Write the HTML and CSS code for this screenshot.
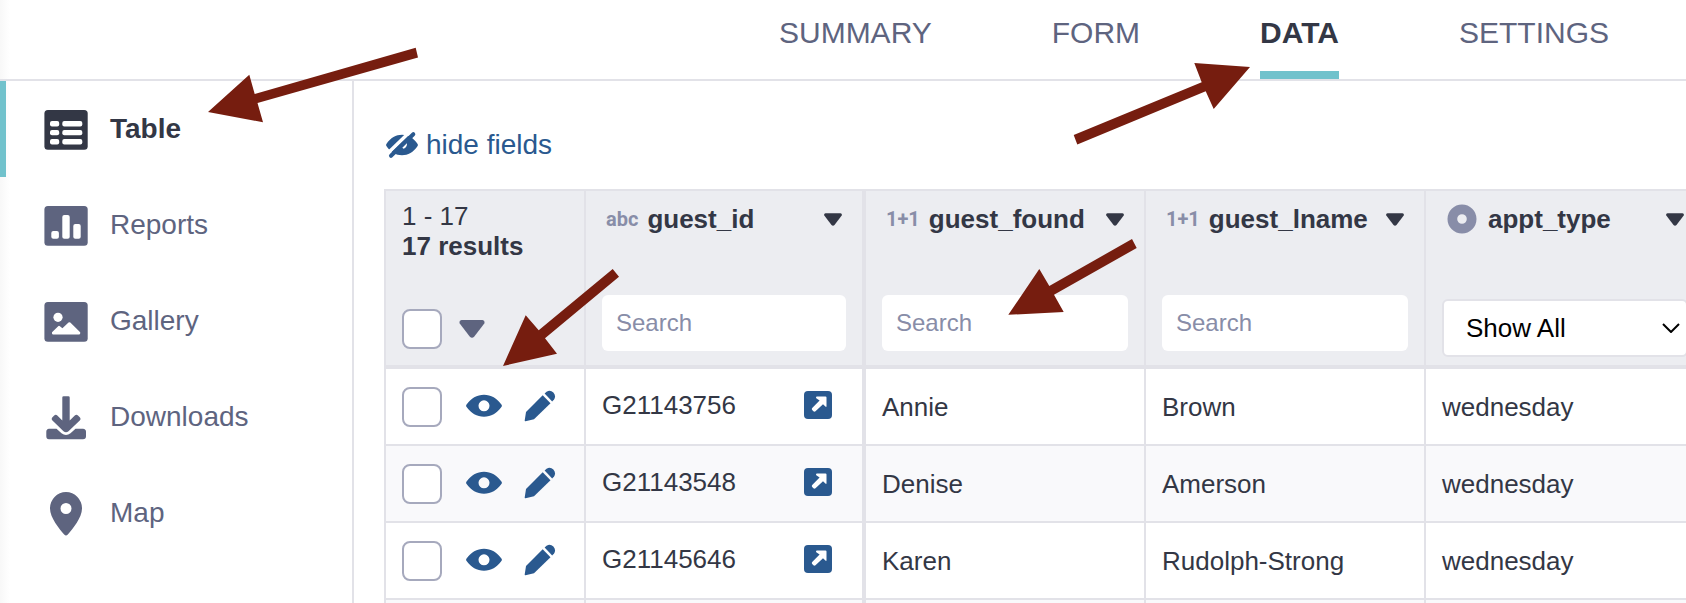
FILE: index.html
```html
<!DOCTYPE html>
<html lang="en">
<head>
<meta charset="utf-8">
<title>Data table</title>
<link rel="stylesheet" href="styles.css">
</head>
<body>
<svg class="sprite" aria-hidden="true">
  <symbol id="eye" viewBox="0 0 36 24"><path fill-rule="evenodd" d="M.4 10.700C5 4.300 11 .8 18 .8s13 3.500 17.600 9.900a2 2 0 0 1 0 2C31 19.200 25 22.700 18 22.700S5 19.200 .4 12.700a2 2 0 0 1 0-2zM18 6.300a5.500 5.500 0 1 0 0 11 5.500 5.500 0 0 0 0-11z"/></symbol>
  <symbol id="pencil" viewBox="0 0 32 32"><path d="M18.700 5.300 26.500 13.300 10 29.200 1.500 31.200Q.6 31.300.7 30.400L2 22z"/><path d="M20.600 3.600 22.600 1.700Q26.300-.4 29.400 2.600 32.200 5.800 30.200 9.300L28.200 11.500z"/></symbol>
  <symbol id="open" viewBox="0 0 28 28"><rect width="28" height="28" rx="4"/><path fill="#fff" d="M12 6.500Q12 5.600 13 5.600H21.500Q22.500 5.600 22.500 6.600V15Q22.500 16.400 21.400 15.600L19 13.200 11.500 20.300Q10.400 21.200 9.400 20.300L8.200 19.100Q7.300 18 8.200 17L15.600 9.600 12.600 7.600Q12 7.200 12 6.500z"/></symbol>
  <symbol id="caret" viewBox="0 0 24 17"><path d="M2 0H22Q24.500.6 23.600 3.200L14 15.800Q12 17.800 10 15.800L.4 3.200Q-.5.6 2 0z"/></symbol>
</svg>
<div class="app">
  <header class="topbar">
    <nav class="tabs" aria-label="Sections">
      <a class="tab" href="#summary">SUMMARY</a>
      <a class="tab" href="#form">FORM</a>
      <a class="tab tab-active" href="#data" aria-current="page">DATA</a>
      <a class="tab" href="#settings">SETTINGS</a>
    </nav>
  </header>
  <nav class="sidebar" aria-label="Data views">
    <a class="side-item side-active" href="#table">
      <svg viewBox="0 0 44 44"><rect x=".4" y="2" width="43.300" height="39.800" rx="3.500"/><g fill="#fff"><rect x="6" y="13" width="9.200" height="5.600" rx="2"/><rect x="18.300" y="13" width="20" height="5.600" rx="2"/><rect x="6" y="22" width="9.200" height="5.300" rx="2"/><rect x="18.300" y="22" width="20" height="5.300" rx="2"/><rect x="6" y="31" width="9.200" height="5.400" rx="2"/><rect x="18.300" y="31" width="20" height="5.400" rx="2"/></g></svg>
      <span>Table</span></a>
    <a class="side-item" href="#reports">
      <svg viewBox="0 0 44 44"><rect x=".4" y="2" width="43.300" height="39.800" rx="3.500"/><g fill="#fff"><rect x="7.300" y="27" width="7.600" height="7.800" rx="2"/><rect x="18.300" y="11" width="7.400" height="23.800" rx="2"/><rect x="29.300" y="20" width="7.400" height="14.800" rx="2"/></g></svg>
      <span>Reports</span></a>
    <a class="side-item" href="#gallery">
      <svg viewBox="0 0 44 44"><rect x=".4" y="2" width="43.300" height="39.800" rx="3.500"/><g fill="#fff"><circle cx="14" cy="17.300" r="4.600"/><path d="M8 32.300 14.200 26.200Q15 25.500 15.900 26.200L18.400 28.300 24.500 22.500Q25.400 21.800 26.300 22.500L36.200 32.300V33.500Q36 34.600 35 34.600H9.200Q8.100 34.500 8 33.500z"/></g></svg>
      <span>Gallery</span></a>
    <a class="side-item" href="#downloads">
      <svg viewBox="0 0 44 44"><path d="M5 32.700H12.500L17.500 37.300Q22 40.500 26.500 37.300L31.500 32.700H39Q42 33 42 35.700V40.300Q42 43.200 39 43.300H5Q2.300 43.200 2.300 40.300V35.700Q2.300 33 5 32.700z"/><path stroke="#fff" stroke-width="5" stroke-linejoin="round" d="M10 23.500 20 33.300Q22 35 24 33.300L34 23.500z"/><path d="M18.300 1.500Q18.300.2 19.600.2H24.400Q25.700.2 25.700 1.500V24.600L30.800 19.500Q32.400 18.200 34 19.500L36 21.500Q37.200 22.900 36 24.300L24.500 35.300Q22 37.300 19.500 35.300L8.200 24.300Q7 22.900 8.200 21.500L10.200 19.500Q11.700 18.200 13.300 19.500L18.300 24.600z"/></svg>
      <span>Downloads</span></a>
    <a class="side-item" href="#map">
      <svg viewBox="0 0 44 44"><path fill-rule="evenodd" d="M22 .1A16 16 0 0 0 6 16.400C6 25.500 15.500 37 20.200 42.600Q22 44.400 23.800 42.600C28.500 37 38 25.500 38 16.400A16 16 0 0 0 22 .1zM22 11a5.500 5.500 0 1 1 0 11 5.500 5.500 0 0 1 0-11z"/></svg>
      <span>Map</span></a>
  </nav>
  <main class="content">
    <button class="hide-fields" type="button">
      <svg viewBox="0 0 32 28"><path fill-rule="evenodd" d="M.4 13C4.500 6.800 10 3.800 16 3.800S27.500 6.800 31.600 13a2 2 0 0 1 0 2C27.500 21.200 22 24.200 16 24.200S4.500 21.200 .4 15a2 2 0 0 1 0-2zM20.500 11.500 16 16.500 17.500 17.700Q21.500 16.500 21 11.500z"/><path stroke="#fff" stroke-width="3.500" d="M1.500 22.500 24 .8"/><path stroke="currentColor" stroke-width="4" stroke-linecap="round" d="M5 24.800 27.300 3.200"/></svg>
      <span>hide fields</span></button>
    <div class="table-wrap">
      <table class="grid">
        <colgroup><col class="col-actions"><col class="col-field"><col class="col-field"><col class="col-field"><col class="col-field"></colgroup>
        <thead>
          <tr>
            <th scope="col"><div class="head head-counts">
              <div class="counts"><span>1 - 17</span><strong>17 results</strong></div>
              <div class="select-all"><input class="check" type="checkbox" aria-label="Select all"><button class="icon-button bulk" type="button" aria-label="Bulk actions"><svg><use href="#caret"/></svg></button></div>
            </div></th>
            <th scope="col" class="pinned"><div class="head">
              <div class="title"><span class="type">abc</span><span class="name">guest_id</span><button class="icon-button menu" type="button" aria-label="guest_id menu"><svg><use href="#caret"/></svg></button></div>
              <input class="search" type="text" placeholder="Search" aria-label="Search guest_id">
            </div></th>
            <th scope="col"><div class="head">
              <div class="title"><span class="type">1+1</span><span class="name">guest_found</span><button class="icon-button menu" type="button" aria-label="guest_found menu"><svg><use href="#caret"/></svg></button></div>
              <input class="search" type="text" placeholder="Search" aria-label="Search guest_found">
            </div></th>
            <th scope="col"><div class="head">
              <div class="title"><span class="type">1+1</span><span class="name">guest_lname</span><button class="icon-button menu" type="button" aria-label="guest_lname menu"><svg><use href="#caret"/></svg></button></div>
              <input class="search" type="text" placeholder="Search" aria-label="Search guest_lname">
            </div></th>
            <th scope="col"><div class="head head-select">
              <div class="title"><svg class="radio-type" viewBox="0 0 30 30"><path fill-rule="evenodd" d="M15 .5a14.500 14.500 0 1 1 0 29 14.500 14.500 0 0 1 0-29zM15 10.200a4.800 4.800 0 1 0 0 9.600 4.800 4.800 0 0 0 0-9.600z"/></svg><span class="name">appt_type</span><button class="icon-button menu" type="button" aria-label="appt_type menu"><svg><use href="#caret"/></svg></button></div>
              <div class="filter"><select aria-label="Filter appt_type"><option>Show All</option></select><svg class="chevron" viewBox="0 0 18 10"><path d="M1 1 9 9 17 1"/></svg></div>
            </div></th>
          </tr>
        </thead>
        <tbody>
          <tr>
            <td><div class="actions"><input class="check" type="checkbox" aria-label="Select G21143756"><button class="icon-button view" type="button" aria-label="View"><svg><use href="#eye"/></svg></button><button class="icon-button edit" type="button" aria-label="Edit"><svg><use href="#pencil"/></svg></button></div></td>
            <td class="pinned"><div class="record"><span>G21143756</span><a class="open" href="#G21143756" aria-label="Open"><svg><use href="#open"/></svg></a></div></td>
            <td>Annie</td><td>Brown</td><td>wednesday</td>
          </tr>
          <tr>
            <td><div class="actions"><input class="check" type="checkbox" aria-label="Select G21143548"><button class="icon-button view" type="button" aria-label="View"><svg><use href="#eye"/></svg></button><button class="icon-button edit" type="button" aria-label="Edit"><svg><use href="#pencil"/></svg></button></div></td>
            <td class="pinned"><div class="record"><span>G21143548</span><a class="open" href="#G21143548" aria-label="Open"><svg><use href="#open"/></svg></a></div></td>
            <td>Denise</td><td>Amerson</td><td>wednesday</td>
          </tr>
          <tr>
            <td><div class="actions"><input class="check" type="checkbox" aria-label="Select G21145646"><button class="icon-button view" type="button" aria-label="View"><svg><use href="#eye"/></svg></button><button class="icon-button edit" type="button" aria-label="Edit"><svg><use href="#pencil"/></svg></button></div></td>
            <td class="pinned"><div class="record"><span>G21145646</span><a class="open" href="#G21145646" aria-label="Open"><svg><use href="#open"/></svg></a></div></td>
            <td>Karen</td><td>Rudolph-Strong</td><td>wednesday</td>
          </tr>
          <tr><td></td><td class="pinned"></td><td></td><td></td><td></td></tr>
        </tbody>
      </table>
    </div>
  </main>
  <svg class="callouts" width="1686" height="603" aria-hidden="true">
    <path d="M208 112 249.300 74.700 254.700 94 415.700 47.700 418 57.400 257.500 103 263 122.300z"/>
    <path d="M1250 67 1194.300 63 1201.700 82.300 1073.700 135 1077.300 144.400 1205.700 91.300 1213.700 109z"/>
    <path d="M503 366 525.700 315.300 538.700 330.300 612.700 269 619 276.700 545 338.300 557 353.700z"/>
    <path d="M1008.300 314.800 1039.300 269 1049.300 286 1132 239 1136.700 248 1054 294.700 1063.700 312z"/>
  </svg>
</div>
</body>
</html>
```
FILE: styles.css
```css
* { box-sizing: border-box; }

body {
  margin: 0;
  font-family: "Liberation Sans", Arial, sans-serif;
  font-size: 26px;
  color: #333745;
  background: #fff;
}

svg { display: block; fill: currentColor; }
a { color: inherit; text-decoration: none; }
button { font: inherit; color: inherit; background: none; border: 0; padding: 0; }

.sprite { position: absolute; width: 0; height: 0; }

.app {
  position: relative;
  display: grid;
  grid-template: auto 1fr / 354px minmax(0, 1fr);
  height: 100vh;
  overflow: hidden;
  background: linear-gradient(to right, #f8f8f8, #fff 10px);
}

.topbar {
  grid-column: 1 / -1;
  border-bottom: 2px solid #e2e2e8;
}

.tabs {
  display: flex;
  justify-content: flex-end;
  gap: 120px;
  padding-right: 77px;
}

.tab {
  padding-top: 15px;
  height: 79px;
  font-size: 30px;
  line-height: 36px;
  color: #5e647f;
}

.tab-active {
  font-weight: bold;
  color: #333745;
  border-bottom: 8px solid #71c2cc;
}

.sidebar { border-right: 2px solid #e2e2e8; }

.side-item {
  display: flex;
  align-items: center;
  gap: 22px;
  height: 96px;
  padding: 2px 0 0 44px;
  font-size: 28px;
  line-height: 32px;
  color: #5e647f;
}

.side-item svg { width: 44px; height: 44px; }
.side-item span { padding-bottom: 2px; }

.side-active {
  padding-left: 38px;
  border-left: 6px solid #71c2cc;
  font-weight: bold;
  color: #333745;
}

.content { padding: 48px 0 0 30px; }

.hide-fields {
  display: flex;
  align-items: center;
  gap: 8px;
  margin: 0 0 28px 2px;
  font-size: 28px;
  line-height: 32px;
  color: #2a598f;
}

.hide-fields svg { width: 32px; height: 28px; }

.table-wrap { overflow: hidden; }

.grid {
  width: 1322px;
  table-layout: fixed;
  border-collapse: separate;
  border-spacing: 0;
  border-top: 2px solid #e2e2e8;
  border-left: 2px solid #e2e2e8;
}

.col-actions { width: 200px; }
.col-field { width: 280px; }

th, td {
  padding: 0 16px;
  border-right: 2px solid #e2e2e8;
  text-align: left;
  line-height: 30px;
}

th {
  border-bottom: 4px solid #e2e2e8;
  background: #ecedf1;
  font-weight: normal;
}

td {
  height: 77px;
  border-bottom: 2px solid #e2e2e8;
  background: #fff;
}

tr:nth-child(even) td { background: #f9f9fb; }
.grid .pinned { border-right-width: 4px; }

.head {
  display: flex;
  flex-direction: column;
  justify-content: space-between;
  height: 174px;
  padding: 13px 0 14px;
}

.head-counts { padding: 10px 0 16px; }
.head-select { padding-bottom: 8px; }

.counts { display: grid; }

.select-all { display: flex; align-items: center; gap: 17px; }

.check {
  appearance: none;
  width: 40px;
  height: 40px;
  margin: 0;
  border: 2px solid #a6a9bd;
  border-radius: 8px;
  background: #fff;
}

.bulk { color: #5e647f; }
.bulk svg { width: 26px; height: 18px; }

.title {
  display: flex;
  align-items: center;
  gap: 9px;
  padding: 0 4px;
}

.type {
  font: bold 20px/30px Roboto, sans-serif;
  color: #888da8;
}

.radio-type { width: 30px; height: 30px; margin: 0 2px 0 1px; color: #888da8; }
.name { font-weight: bold; }
.menu { margin-left: auto; }
.menu svg { width: 18px; height: 13px; }

.search {
  width: 100%;
  height: 56px;
  padding: 0 14px;
  border: 0;
  border-radius: 6px;
  font: 24px "Liberation Sans", Arial, sans-serif;
  background: #fff;
}

.search::placeholder { color: #888da8; opacity: 1; }

.filter { display: grid; align-items: center; }

.filter select {
  grid-area: 1 / 1;
  appearance: none;
  width: 100%;
  height: 58px;
  padding: 0 22px;
  border: 2px solid #e2e2e8;
  border-radius: 6px;
  font: 26px "Liberation Sans", Arial, sans-serif;
  color: #000;
  background: #fff;
}

.chevron {
  grid-area: 1 / 1;
  justify-self: end;
  width: 18px;
  height: 10px;
  margin-right: 8px;
  fill: none;
  stroke: #000;
  stroke-width: 2;
  pointer-events: none;
}

.actions { display: flex; align-items: center; color: #2a598f; }
.icon-button.view { margin: 0 22px 2px 24px; }
.icon-button.edit { margin-bottom: 2px; }
.view svg { width: 36px; height: 24px; }
.edit svg { width: 32px; height: 32px; }

.record {
  display: flex;
  align-items: center;
  justify-content: space-between;
  padding: 0 14px 3px 0;
}

.open { color: #2a598f; }
.open svg { width: 28px; height: 28px; }

.callouts {
  position: absolute;
  top: 0;
  left: 0;
  fill: #761d0f;
  pointer-events: none;
}
```
